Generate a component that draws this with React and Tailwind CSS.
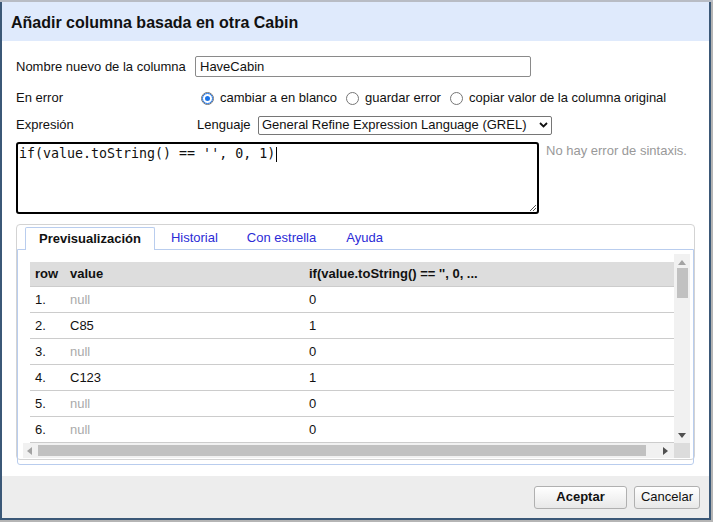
import React from 'react';

const rows = [
  ['1.', 'null', '0'],
  ['2.', 'C85', '1'],
  ['3.', 'null', '0'],
  ['4.', 'C123', '1'],
  ['5.', 'null', '0'],
  ['6.', 'null', '0'],
];

function Radio({ checked }) {
  return (
    <span className="inline-flex h-[13px] w-[13px] items-center justify-center rounded-full border border-[#767676] bg-white">
      {checked && <span className="h-[9px] w-[9px] rounded-full border-[2px] border-white bg-[#1a73e8] outline outline-1 outline-[#1a73e8]" />}
    </span>
  );
}

export default function App() {
  return (
    <div className="flex h-[522px] w-[713px] flex-col overflow-hidden bg-[#b5b5b5] text-[13px] text-[#111]" style={{ fontFamily: '"Liberation Sans", Arial, sans-serif' }}>
      <div className="h-[2px] shrink-0 bg-[#b8bcc4]" />
      <div className="flex h-[518px] w-[711px] shrink-0 flex-col border-x-2 border-b-2 border-[#3b5877] bg-white">
        {/* header */}
        <div className="flex h-[39px] shrink-0 items-center bg-[#dfeafc] pl-[9px] pt-[2px]">
          <h1 className="text-[16px] font-bold text-[#111]">Añadir columna basada en otra Cabin</h1>
        </div>

        {/* body */}
        <div className="flex flex-1 flex-col pl-[14px] pr-[14px]">
          <div className="mt-[15px] flex h-[21px] items-center">
            <span className="w-[179px]">Nombre nuevo de la columna</span>
            <div className="flex h-[21px] w-[336px] items-center rounded-[2px] border border-[#8a8a8a] pl-[4px]">HaveCabin</div>
          </div>

          <div className="mt-[11px] flex h-[20px] items-center">
            <span className="w-[185px]">En error</span>
            <Radio checked />
            <span className="ml-[6px]">cambiar a en blanco</span>
            <span className="ml-[9px] flex items-center"><Radio /></span>
            <span className="ml-[6px]">guardar error</span>
            <span className="ml-[9px] flex items-center"><Radio /></span>
            <span className="ml-[6px]">copiar valor de la columna original</span>
          </div>

          <div className="mt-[8px] flex h-[18px] items-center">
            <span className="w-[181px]">Expresión</span>
            <span className="w-[61px]">Lenguaje</span>
            <div className="flex h-[19px] w-[294px] items-center justify-between rounded-[2px] border border-[#767676] pl-[3px] pr-[3px]">
              <span>General Refine Expression Language (GREL)</span>
              <svg width="9" height="6" viewBox="0 0 9 6"><path d="M1 1l3.5 3.5L8 1" fill="none" stroke="#111" strokeWidth="1.8" /></svg>
            </div>
          </div>

          <div className="mt-[8px] flex items-start">
            <div className="relative h-[72px] w-[523px] rounded-[3px] border-2 border-black pl-[1px]">
              <span className="text-[13.3px] leading-[16px]" style={{ fontFamily: '"DejaVu Sans Mono", monospace' }}>if(value.toString() == '', 0, 1)</span>
              <span className="ml-[1px] inline-block h-[15px] w-px bg-black align-middle" />
              <svg className="absolute bottom-0 right-0" width="8" height="8" viewBox="0 0 8 8">
                <path d="M7 1L1 7M7 4L4 7" stroke="#555" strokeWidth="1" />
              </svg>
            </div>
            <span className="ml-[7px] mt-[-1px] text-[#999]">No hay error de sintaxis.</span>
          </div>

          {/* tabs */}
          <div className="mt-[10px] flex h-[236px] w-[679px] flex-col rounded-[4px] border border-[#d3d3d3] pt-[2px]">
            <div className="flex h-[22px] items-end pl-[8px]">
              <div className="relative z-10 mb-[-1px] flex h-[23px] items-center rounded-t-[2px] border border-b-0 border-[#b9cdee] bg-white px-[13px] font-bold">Previsualización</div>
              <div className="flex h-[22px] items-center px-[16px] text-[#2b2bd6]">Historial</div>
              <div className="flex h-[22px] items-center px-[13px] text-[#2b2bd6]">Con estrella</div>
              <div className="flex h-[22px] items-center px-[17px] text-[#2b2bd6]">Ayuda</div>
            </div>
            <div className="flex flex-1 flex-col rounded-b-[3px] border border-[#b9cdee] pb-[6px] pl-[5px] pr-[3px] pt-[4px]">
              <div className="flex flex-1 flex-col">
                <div className="flex flex-1 overflow-hidden">
                  <div className="flex-1 overflow-hidden pl-[7px] pt-[8px]">
                    <div className="w-[700px]">
                      <div className="flex h-[25px] items-center border-b border-[#cccccc] bg-[#dddddd] font-bold">
                        <span className="w-[35px] pl-[5px]">row</span>
                        <span className="w-[239px] pl-[5px]">value</span>
                        <span className="pl-[5px]">if(value.toString() == '', 0, ...</span>
                      </div>
                      {rows.map(([n, v, r]) => (
                        <div key={n} className="flex h-[26px] items-center border-b border-[#cccccc] bg-white">
                          <span className="w-[35px] pl-[5px]">{n}</span>
                          <span className={`w-[239px] pl-[5px] ${v === 'null' ? 'text-[#aaaaaa]' : ''}`}>{v}</span>
                          <span className="pl-[5px]">{r}</span>
                        </div>
                      ))}
                    </div>
                  </div>
                  {/* vertical scrollbar */}
                  <div className="flex w-[16px] flex-col items-center bg-[#f1f1f1]">
                    <svg className="mt-[6px]" width="8" height="5" viewBox="0 0 8 5"><path d="M0 5L4 0L8 5z" fill="#a3a3a3" /></svg>
                    <div className="mt-[3px] h-[30px] w-[11px] bg-[#c1c1c1]" />
                    <div className="flex-1" />
                    <svg className="mb-[5px]" width="8" height="5" viewBox="0 0 8 5"><path d="M0 0L4 5L8 0z" fill="#505050" /></svg>
                  </div>
                </div>
                {/* horizontal scrollbar */}
                <div className="flex h-[15px] items-center">
                  <div className="flex h-[15px] flex-1 items-center bg-[#f1f1f1]">
                    <svg className="ml-[4px]" width="5" height="8" viewBox="0 0 5 8"><path d="M5 0L0 4L5 8z" fill="#a3a3a3" /></svg>
                    <div className="ml-[6px] h-[11px] w-[608px] bg-[#c1c1c1]" />
                    <div className="flex-1" />
                    <svg className="mr-[6px]" width="5" height="8" viewBox="0 0 5 8"><path d="M0 0L5 4L0 8z" fill="#505050" /></svg>
                  </div>
                  <div className="h-[15px] w-[16px] bg-[#dcdcdc]" />
                </div>
              </div>
            </div>
          </div>
        </div>

        {/* footer */}
        <div className="flex h-[42px] shrink-0 items-center justify-end gap-[7px] bg-[#ededed] pr-[9px]">
          <button className="h-[23px] w-[93px] rounded-[3px] border border-[#b0b0b0] bg-gradient-to-b from-white to-[#e8e8e8] font-bold text-[#111]">Aceptar</button>
          <button className="h-[23px] w-[66px] rounded-[3px] border border-[#b0b0b0] bg-gradient-to-b from-white to-[#e8e8e8] text-[#111]">Cancelar</button>
        </div>
      </div>
    </div>
  );
}
